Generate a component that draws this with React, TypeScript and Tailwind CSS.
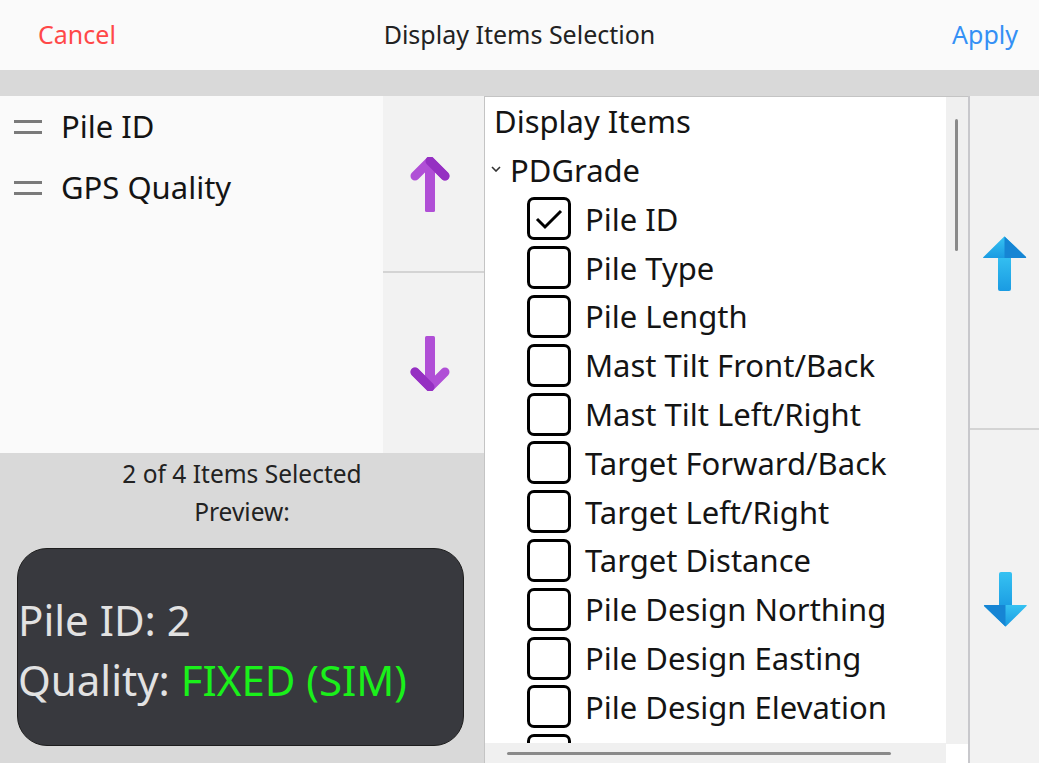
import React from "react";

const items = [
  "Pile ID",
  "Pile Type",
  "Pile Length",
  "Mast Tilt Front/Back",
  "Mast Tilt Left/Right",
  "Target Forward/Back",
  "Target Left/Right",
  "Target Distance",
  "Pile Design Northing",
  "Pile Design Easting",
  "Pile Design Elevation",
  "Pile Final Position",
];

function PurpleArrow({ down }: { down?: boolean }) {
  return (
    <svg width="40" height="56" viewBox="0 0 40 56" className={down ? "rotate-180" : ""}>
      <rect x="15" y="6" width="10" height="49" rx="1.5" fill="#b04fd6" />
      <path d="M5 19 L20 4 L35 19" fill="none" stroke="#b04fd6" strokeWidth="9" strokeLinejoin="round" strokeLinecap="round" />
      <path d="M20 4 L35 19" fill="none" stroke="#9530c2" strokeWidth="9" strokeLinecap="round" />
    </svg>
  );
}

function BlueArrow({ down }: { down?: boolean }) {
  const id = down ? "bd" : "bu";
  return (
    <svg width="44" height="56" viewBox="0 0 44 56" className={down ? "rotate-180" : ""}>
      <defs>
        <linearGradient id={id} x1="0" y1={down ? "1" : "0"} x2="0" y2={down ? "0" : "1"}>
          <stop offset="0" stopColor="#36c2f2" />
          <stop offset="1" stopColor="#1a9be2" />
        </linearGradient>
      </defs>
      <rect x="15" y="18" width="13" height="37" rx="2" fill={`url(#${id})`} />
      <path d="M20.5 1.2 Q21.5 0 22.5 1.2 L43 21 Q43.5 22 42 22 L1 22 Q-0.5 22 0.5 21 Z" fill={`url(#${id})`} />
      <path d="M21.5 0.5 L43 21 Q43.5 22 42 22 L21.5 22 Z" fill="#1685d4" />
    </svg>
  );
}

function Checkbox({ checked }: { checked?: boolean }) {
  return (
    <div className="w-[44px] h-[43px] flex-none border-[3px] border-black rounded-[7px] bg-white flex items-center justify-center">
      {checked && (
        <svg width="30" height="24" viewBox="0 0 30 24">
          <path d="M3 12 L11 20 L27 4" fill="none" stroke="#000" strokeWidth="3" />
        </svg>
      )}
    </div>
  );
}

export default function App() {
  return (
    <div className="w-[1039px] h-[763px] overflow-hidden flex flex-col font-['Noto_Sans',sans-serif] text-[#141414]">
      {/* header */}
      <div className="h-[70px] flex-none grid grid-cols-[1fr_auto_1fr] items-center bg-[#fafafa] text-[25px]">
        <span className="pl-[38px] text-[#ff4848]">Cancel</span>
        <span className="text-[#222]">Display Items Selection</span>
        <span className="text-right pr-[21px] text-[#3490f5]">Apply</span>
      </div>
      <div className="h-[26px] flex-none bg-[#d9d9d9]" />

      <div className="flex flex-1 min-h-0">
        {/* left side */}
        <div className="w-[484px] flex-none flex flex-col">
          <div className="h-[357px] flex-none flex">
            <div className="w-[383px] bg-[#fafafa]">
              {["Pile ID", "GPS Quality"].map((t) => (
                <div key={t} className="h-[61px] flex items-center">
                  <div className="w-[28px] ml-[14px] flex flex-col gap-[8px]">
                    <div className="h-[3px] bg-[#7a7a7a]" />
                    <div className="h-[3px] bg-[#7a7a7a]" />
                  </div>
                  <span className="ml-[19px] text-[31px]">{t}</span>
                </div>
              ))}
            </div>
            <div className="w-[101px] bg-[#f2f2f2] flex flex-col">
              <div className="h-[177px] border-b-2 border-[#d4d4d4] flex items-center justify-center pt-[2px] pr-[8px]">
                <PurpleArrow />
              </div>
              <div className="flex-1 flex items-center justify-center pr-[8px]">
                <PurpleArrow down />
              </div>
            </div>
          </div>
          <div className="flex-1 bg-[#d9d9d9] flex flex-col items-center">
            <div className="mt-[4px] h-[34px] leading-[34px] text-[24.5px] text-[#222]">2 of 4 Items Selected</div>
            <div className="mt-[4px] h-[34px] leading-[34px] text-[24.5px] text-[#222]">Preview:</div>
            <div className="self-start ml-[17px] mt-[19px] w-[447px] h-[198px] bg-[#38393e] border-[1.5px] border-[#1e1e1e] rounded-[30px] flex flex-col justify-center pt-[6px] text-[42px] leading-[60px]">
              <div className="text-[#e2e2e2]">Pile ID: 2</div>
              <div className="text-[#e2e2e2] whitespace-nowrap">
                Quality: <span className="text-[#1af01a]">FIXED (SIM)</span>
              </div>
            </div>
          </div>
        </div>

        {/* display items list */}
        <div className="w-[484px] flex-none relative bg-white border-l border-t border-[#c4c4c4] overflow-hidden">
          <div className="text-[31px]">
            <div className="h-[48.8px] flex items-center pl-[9px]">Display Items</div>
            <div className="h-[48.8px] flex items-center">
              <svg width="10" height="6" viewBox="0 0 10 6" className="ml-[6px] mt-[-2px]">
                <path d="M1 1 L5 5 L9 1" fill="none" stroke="#333" strokeWidth="1.6" />
              </svg>
              <span className="ml-[9px]">PDGrade</span>
            </div>
            {items.map((t, i) => (
              <div key={t} className="h-[48.8px] flex items-center pl-[42px]">
                <Checkbox checked={i === 0} />
                <span className="ml-[14px] whitespace-nowrap">{t}</span>
              </div>
            ))}
          </div>
          {/* vertical scrollbar */}
          <div className="absolute top-0 right-0 w-[22px] h-[647px] bg-[#f0f0f0]">
            <div className="absolute left-[9px] top-[22px] w-[3px] h-[132px] rounded-full bg-[#8a8a8a]" />
          </div>
          {/* horizontal scrollbar */}
          <div className="absolute left-0 bottom-0 w-[461px] h-[20px] bg-[#f0f0f0]">
            <div className="absolute left-[22px] top-[9px] h-[3px] w-[384px] rounded-full bg-[#8a8a8a]" />
          </div>
        </div>

        {/* right arrows */}
        <div className="flex-1 bg-[#f2f2f2] border-l-2 border-[#c8c8cc] flex flex-col">
          <div className="h-[334px] border-b-2 border-[#d4d4d4] flex items-center justify-center pt-[4px]">
            <BlueArrow />
          </div>
          <div className="flex-1 flex items-center justify-center pt-[4px]">
            <BlueArrow down />
          </div>
        </div>
      </div>
    </div>
  );
}
